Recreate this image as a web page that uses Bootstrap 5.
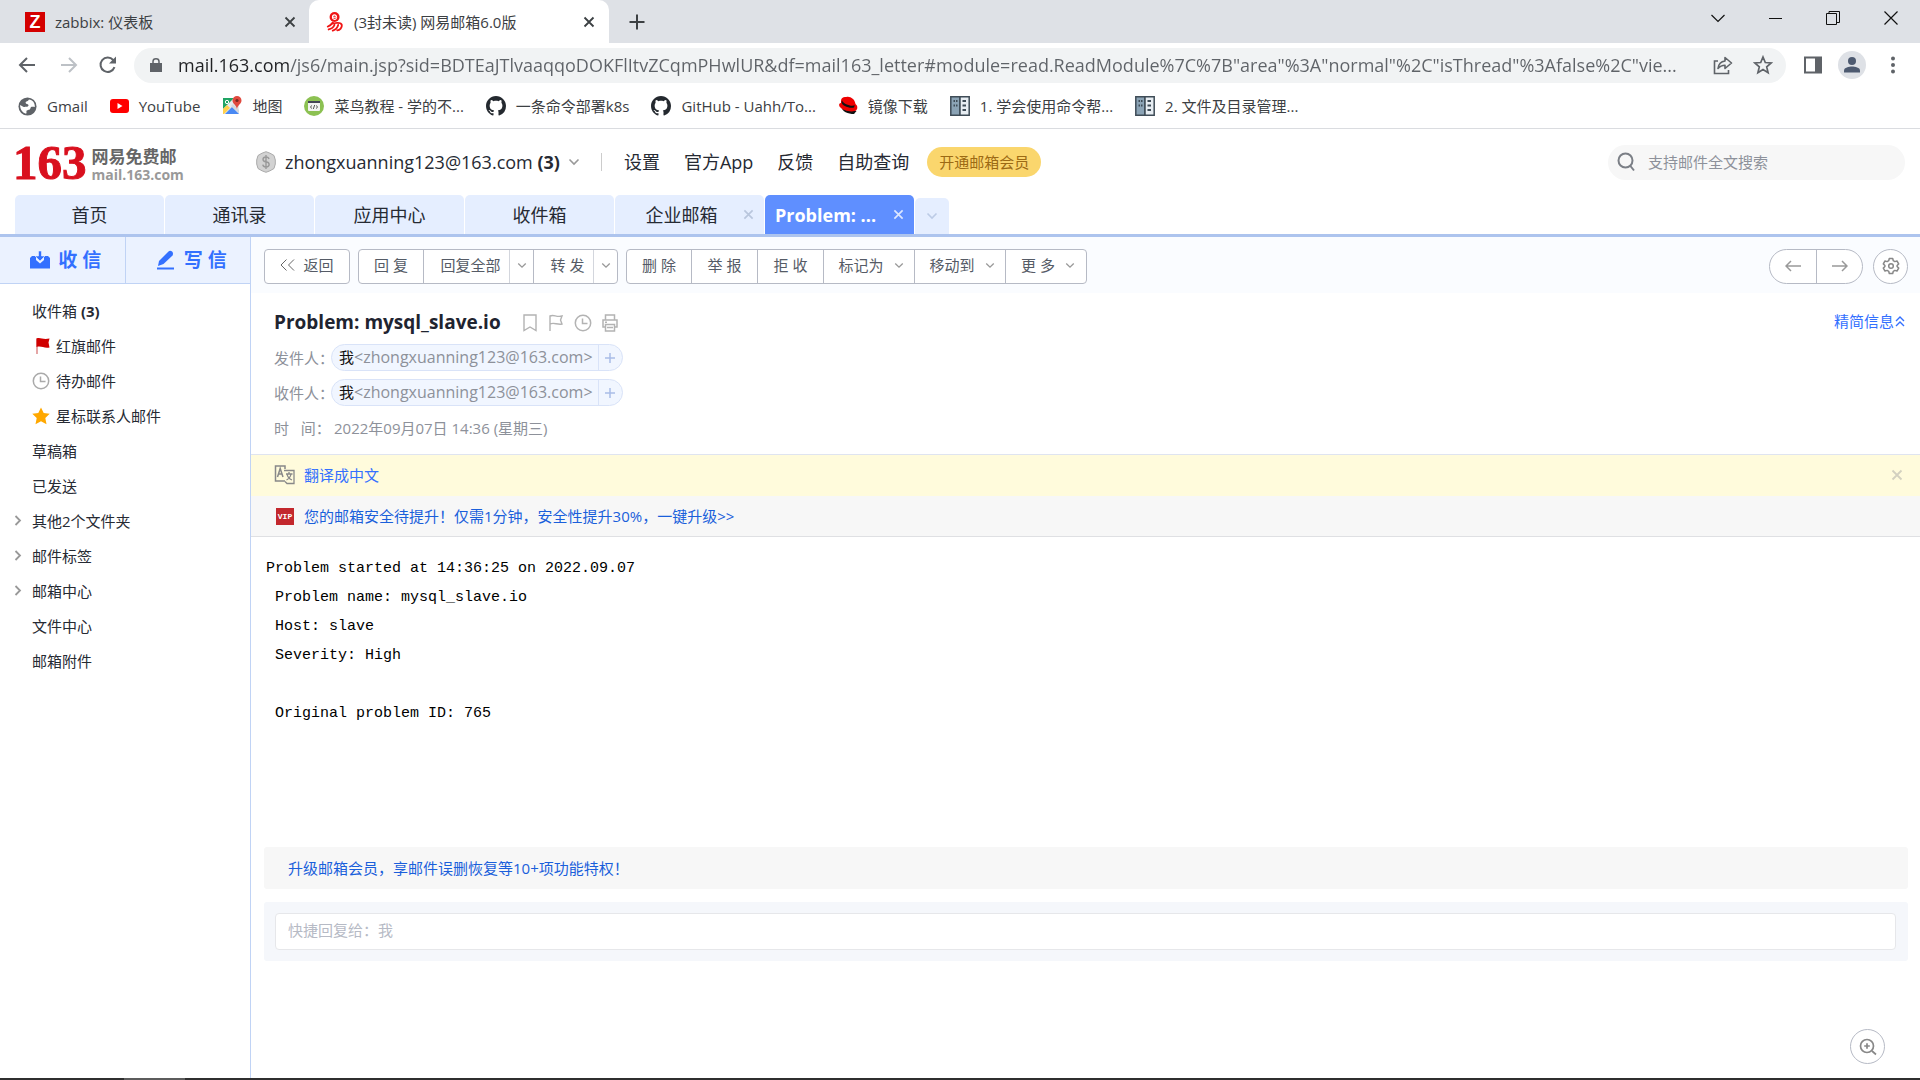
<!DOCTYPE html>
<html lang="zh-CN">
<head>
<meta charset="utf-8">
<meta name="viewport" content="width=device-width, initial-scale=1">
<title>(3封未读) 网易邮箱6.0版</title>
<link href="https://cdn.jsdelivr.net/npm/bootstrap@5.3.0/dist/css/bootstrap.min.css" rel="stylesheet">
<style>
  body { font-family: "Open Sans", "Noto Sans CJK SC", sans-serif; font-size: 15px; line-height: 20px; color: #262a33; }
  a { text-decoration: none; color: inherit; }
  svg { display: block; flex: none; fill: none; }
  svg:not([stroke]) { stroke: currentColor; }
  button { background: none; border: 0; padding: 0; color: inherit; line-height: 20px; }
  .ic-btn { display: inline-flex; align-items: center; justify-content: center; flex: none; }

  /* browser window */
  .tabstrip { background: #dee1e6; height: 43px; color: #3c4043; }
  .btab { width: 309px; height: 43px; padding: 0 13px 0 25px; gap: 10px; }
  .btab.current { width: 300px; background: #fff; border-radius: 10px 10px 0 0; padding-left: 17px; padding-right: 14px; }
  .zfav { width: 20px; height: 20px; background: #d40000; color: #fff; font: bold 18px/20px "Liberation Sans", sans-serif; text-align: center; }
  .winctl { gap: 44px; padding: 0 22px 7px 0; color: #111; }
  .addrbar { height: 44px; padding: 0 24px 0 18px; color: #5f6368; }
  .omnibox { background: #f1f3f4; border-radius: 18px; height: 35px; padding: 0 13px 0 16px; margin-right: 18px; }
  .omnibox input { border: 0; outline: 0; padding: 0; min-width: 0; font-size: 18px; line-height: 26px; height: 30px; color: transparent;
    background: linear-gradient(90deg, #202124 111px, #5f6368 111px); -webkit-background-clip: text; background-clip: text; }
  .avatar { width: 28px; height: 28px; border-radius: 50%; background: #dee1e6; color: #4d5a70; }
  .bookmarks { height: 42px; padding: 0 18px 3px; gap: 22px; border-bottom: 1px solid #dadce0; color: #3c4043; white-space: nowrap; }
  .bookmarks a { display: flex; align-items: center; gap: 10px; }

  /* mail header */
  .mailhead { height: 66px; padding: 0 15px 0 13px; font-size: 18px; line-height: 24px; color: #262a33; white-space: nowrap; }
  .brand { width: 242px; gap: 5px; }
  .brand-num { font: bold 49px/40px "Liberation Serif", serif; color: #d9101e; -webkit-text-stroke: 1px #d9101e; padding-top: 2px; }
  .brand-text { padding-top: 6px; }
  .brand-cn { font-size: 17px; line-height: 19px; font-weight: 700; color: #666; }
  .brand-en { font-size: 14px; line-height: 17px; font-weight: 700; color: #999; }
  .headlinks { gap: 24px; margin-left: 22px; }
  .vline { width: 1px; height: 18px; background: #ccc; margin-left: 21px; }
  .vip-pill { background: #fad66d; color: #9c6a14; border-radius: 15px; height: 30px; padding: 0 12px; font-size: 15px; margin-left: 18px; }
  .searchbox { width: 297px; height: 35px; border-radius: 18px; background: #f7f7f7; padding: 0 9px; gap: 13px; color: #7b7f86; }
  .searchbox input { border: 0; outline: 0; background: none; padding: 0; font-size: 15px; flex: 1; min-width: 0; }
  .searchbox input::placeholder { color: #8d919a; opacity: 1; }

  .modtabs { padding-left: 15px; gap: 1px; border-bottom: 3px solid #adc4ee; height: 42px; align-items: flex-end; font-size: 18px; line-height: 24px; }
  .modtab { width: 149px; height: 39px; background: #e5eeff; border-radius: 5px 5px 0 0; position: relative; display: flex; align-items: center; justify-content: center; color: #262a33; }
  .modtab.current { background: #5f8fff; color: #fff; font-weight: 700; justify-content: flex-start; padding-left: 10px; }
  .modtab .ic-btn { position: absolute; right: 10px; top: 14px; color: #b9c6dd; }
  .modtab.current .ic-btn { color: #dde7ff; }
  .modtab.slim { width: 34px; height: 36px; }
  .modtab.slim svg { color: #bccbe6; }

  /* sidebar */
  .side { width: 251px; border-right: 1px solid #c0d3f5; flex: none; }
  .side-acts { height: 47px; background: #ebf2ff; border-bottom: 1px solid #c0d3f5; color: #3370ff; font-size: 19px; }
  .side-acts button { flex: 1; gap: 8px; padding-left: 7px; font-weight: 700; }
  .side-acts button + button { border-left: 1px solid #c0d3f5; }
  .folders { padding: 9px 0 0; margin: 0; list-style: none; }
  .folders a { display: flex; align-items: center; height: 35px; padding-left: 32px; gap: 6px; }
  .folders .fold { padding-left: 14px; gap: 10px; }

  /* reading pane */
  .toolbar163 { height: 56px; background: #fafcff; padding: 2px 12px 0 13px; gap: 8px; color: #555b66; }
  .bgroup { display: flex; height: 35px; border: 1px solid #b6bac5; border-radius: 4px; background: #fff; }
  .bgroup button { display: flex; align-items: center; justify-content: center; width: 66px; white-space: nowrap; gap: 10px; padding-bottom: 2px; }
  .bgroup button + button { border-left: 1px solid #b6bac5; }
  .bgroup .w-first { width: 64px; }
  .bgroup .w-back { width: 84px; gap: 8px; }
  .bgroup .w-all { width: 86px; padding-left: 8px; }
  .bgroup .w-fwd { width: 60px; padding-left: 8px; }
  .bgroup .w-drop { width: 24px; border-color: #d3d6dd; }
  .bgroup .w-menu { width: 91px; padding-left: 4px; }
  .bgroup .w-more { width: 81px; padding-left: 4px; }
  .bgroup svg { color: #999; }
  .bgroup.round { border-radius: 18px; margin-right: 2px; }
  .bgroup.round button { width: 46px; padding: 0; }
  .circ { width: 35px; height: 35px; border: 1px solid #b6bac5; border-radius: 50%; background: #fff; color: #888; }
  .meta { padding: 16px 14px 0 23px; border-bottom: 1px solid #dfe4f0; color: #8d919a; height: 162px; }
  .meta-top { margin-bottom: 4px; }
  .subject { font-size: 19px; line-height: 27px; font-weight: 700; color: #1f2430; margin: 0; }
  .marks { gap: 10px; color: #b3b3b3; margin-left: 21px; }
  .brief { color: #3370ff; padding-bottom: 4px; }
  .metarow { height: 35px; }
  .metarow .lab { width: 57px; flex: none; white-space: pre; }
  .chip { height: 27px; border: 1px solid #d9e3f8; border-radius: 14px; background: #f1f6ff; font-size: 16px; }
  .chip > span { padding: 0 5px 2px 7px; }
  .chip b { font-weight: 400; font-size: 15px; color: #111; }
  .chip button { width: 24px; height: 25px; border-left: 1px solid #d9e3f8; color: #a9bde8; }
  .metarow .when { padding-left: 3px; }
  .strip { height: 41px; padding: 0 17px 0 23px; }
  .strip.trans { background: #fffbdc; color: #3370ff; padding-bottom: 2px; }
  .strip.safe { background: #f7f7f7; color: #1a5fdb; border-bottom: 1px solid #dfe0e3; }
  .strip-ico { width: 30px; }
  .dismiss { color: #d3d0c0; }
  .vipfav { width: 18px; height: 17px; margin-left: 2px; background: #c3282d; color: #fff; font: bold 8px/17px "Liberation Mono", monospace; text-align: center; }
  .mailbody { font: 15px/29px "Liberation Mono", monospace; color: #000; margin: 0; padding: 17px 15px 0; min-height: 310px; overflow: visible; }
  .promo { margin: 0 12px 0 13px; height: 42px; background: #f7f7f7; border-radius: 3px; padding: 0 24px; color: #1a5fdb; }
  .quick { margin: 13px 12px 0 13px; background: #f5f7fb; border-radius: 3px; padding: 11px 12px 11px 11px; }
  .quick input { height: 37px; width: 100%; border: 1px solid #e6e7ea; border-radius: 4px; padding: 0 12px 4px; font-size: 15px; background: #fff; display: block; }
  .quick input::placeholder { color: #b6bac5; opacity: 1; }
  .zoomer { position: absolute; right: 35px; bottom: 14px; }
  .deskbar { height: 2px; background: #2f2f2f; padding-left: 124px; flex: none; }
  .deskbar i { display: block; width: 61px; height: 2px; background: #5c5c5c; }
</style>
<script src="https://cdn.jsdelivr.net/npm/bootstrap@5.3.0/dist/js/bootstrap.bundle.min.js"></script>
</head>
<body class="d-flex flex-column min-vh-100">
<svg class="d-none" aria-hidden="true">
  <symbol id="chev" viewBox="0 0 12 8"><path d="M1.500 1.500 6 6l4.500-4.500" stroke-width="1.600"/></symbol>
  <symbol id="cross" viewBox="0 0 12 12"><path d="M1.500 1.500l9 9M10.500 1.500l-9 9" stroke-width="1.800"/></symbol>
  <symbol id="crossthin" viewBox="0 0 14 14"><path d="M.5.5l13 13M13.500.5l-13 13" stroke-width="1.200"/></symbol>
  <symbol id="arrow" viewBox="0 0 18 16"><path d="M17 8H2M9 1 2 8l7 7" stroke-width="2"/></symbol>
  <symbol id="clock" viewBox="0 0 18 18"><circle cx="9" cy="9" r="7.700" stroke-width="1.500"/><path d="M8.500 4.500V9.500h5" stroke-width="1.500"/></symbol>
  <symbol id="octo" viewBox="0 0 16 16"><path fill="#24292f" stroke="none" d="M8 0C3.580 0 0 3.580 0 8c0 3.540 2.290 6.530 5.470 7.590.4.07.55-.17.55-.38 0-.19-.01-.82-.01-1.490-2.010.37-2.530-.49-2.690-.94-.09-.23-.48-.94-.82-1.130-.28-.15-.68-.52-.01-.53.63-.01 1.080.58 1.230.82.72 1.210 1.870.87 2.330.66.07-.52.28-.87.51-1.070-1.780-.2-3.640-.89-3.640-3.950 0-.87.31-1.590.82-2.150-.08-.2-.36-1.020.08-2.120 0 0 .67-.21 2.200.82.64-.18 1.320-.27 2-.27.68 0 1.360.09 2 .27 1.530-1.040 2.200-.82 2.200-.82.44 1.100.16 1.920.08 2.120.51.56.82 1.270.82 2.150 0 3.070-1.870 3.750-3.650 3.950.29.25.54.73.54 1.480 0 1.070-.01 1.930-.01 2.200 0 .21.15.46.55.38A8.012 8.012 0 0 0 16 8c0-4.420-3.580-8-8-8z"/></symbol>
  <symbol id="book" viewBox="0 0 20 20"><path fill="#8ba3b5" stroke="#3f4c57" stroke-width="1.500" d="M.8.8H10v18.400H.8z"/><path fill="#e7edf2" stroke="#3f4c57" stroke-width="1.500" d="M10 .8h9.200v18.400H10z"/><path stroke="#3f4c57" stroke-width="2" d="M3.500 5h1.500M6 5h1.500M3.500 9.500h1.500M6 9.500h1.500M12.500 5h3.500M12.500 9.500h3.500M12.500 14h3.500"/></symbol>
</svg>

<header>
  <div class="tabstrip d-flex">
    <div class="btab d-flex align-items-center"><span class="zfav">Z</span><span class="flex-grow-1">zabbix: 仪表板</span>
      <button class="ic-btn" aria-label="关闭标签页"><svg width="12" height="12"><use href="#cross"/></svg></button></div>
    <div class="btab current d-flex align-items-center">
      <svg width="18" height="20" viewBox="0 0 18 22" stroke="#f01414" stroke-width="2" stroke-linecap="round"><circle cx="8.500" cy="5.500" r="5.500" fill="#f01414" stroke="none"/><path d="M6.300 5.800h4.400c0-3.400-4.500-3.400-4.500 0 0 2.600 3 2.800 4.200 1.400" stroke="#fff" stroke-width="1.300"/><path d="M6.500 11.500C5 14 3 15.500 1 16M4.500 13.500c4-2 11.500-2.500 12 .8.300 2.800-2 5.700-5 6M8.500 14c-1 2.500-3.500 4.500-6.500 5.200M12.500 14.200c-.8 3-3 5.300-6 6.300"/></svg>
      <span class="flex-grow-1">(3封未读) 网易邮箱6.0版</span>
      <button class="ic-btn" aria-label="关闭标签页"><svg width="12" height="12"><use href="#cross"/></svg></button></div>
    <button class="ic-btn ms-3 ps-1" aria-label="新标签页"><svg width="16" height="16" viewBox="0 0 16 16"><path d="M8 .5v15M.5 8h15" stroke-width="2"/></svg></button>
    <div class="winctl d-flex align-items-center ms-auto">
      <button class="ic-btn" aria-label="搜索标签页"><svg width="14" height="9" viewBox="0 0 14 9"><path d="M.5 1 7 7.500 13.500 1" stroke-width="1.200"/></svg></button>
      <button class="ic-btn" aria-label="最小化"><svg width="13" height="13" viewBox="0 0 13 13"><path d="M0 6.500h13"/></svg></button>
      <button class="ic-btn" aria-label="还原"><svg width="14" height="14" viewBox="0 0 14 14"><path d="M.5 2.500h10v11H.5zM3 2.500v-2h10.500v11h-3"/></svg></button>
      <button class="ic-btn" aria-label="关闭"><svg width="14" height="14"><use href="#crossthin"/></svg></button>
    </div>
  </div>
  <div class="addrbar d-flex align-items-center">
    <button class="ic-btn" aria-label="后退"><svg width="18" height="16"><use href="#arrow"/></svg></button>
    <button class="ic-btn ms-4" aria-label="前进"><svg width="18" height="16" viewBox="0 0 18 16" stroke="#bdc1c6"><path d="M1 8h15M9 1l7 7-7 7" stroke-width="2"/></svg></button>
    <button class="ic-btn mx-3 ps-1" aria-label="重新加载"><svg width="20" height="20" viewBox="0 0 20 20"><path d="M16.500 12.200A7.200 7.200 0 1 1 15.200 5l1 1.200" stroke-width="2"/><path d="M18 1.500v7h-7z" fill="currentColor" stroke="none"/></svg></button>
    <div class="omnibox d-flex align-items-center flex-grow-1 gap-3">
      <svg width="12" height="14" viewBox="0 0 12 14"><path d="M0 5h12v9H0z" fill="currentColor" stroke="none"/><path d="M3 6V3.500a3 2.700 0 0 1 6 0V6" stroke-width="1.500"/></svg>
      <input class="flex-grow-1" type="text" aria-label="地址栏" value="mail.163.com/js6/main.jsp?sid=BDTEaJTlvaaqqoDOKFlItvZCqmPHwlUR&amp;df=mail163_letter#module=read.ReadModule%7C%7B&quot;area&quot;%3A&quot;normal&quot;%2C&quot;isThread&quot;%3Afalse%2C&quot;vie...">
      <button class="ic-btn" aria-label="分享"><svg width="20" height="20" viewBox="0 0 20 20" stroke-width="1.600"><path d="M5 6H1.500v12.500h14V15"/><path d="M12 2.500l6.500 5.500-6.500 5.500v-3.300c-3 0-5 .8-7 3.300.5-4 2.500-7 7-7.500z" stroke-linejoin="round"/></svg></button>
      <button class="ic-btn ms-1" aria-label="收藏"><svg width="20" height="20" viewBox="0 0 20 20"><path d="M10 2l2.300 5.500 5.900.5-4.500 3.900 1.400 5.800L10 14.600l-5.100 3.100 1.400-5.800L1.800 8l5.900-.5z" stroke-width="1.700"/></svg></button>
    </div>
    <button class="ic-btn" aria-label="侧边栏"><svg width="18" height="18" viewBox="0 0 18 18"><path d="M1 1.500h16v15H1z" stroke-width="2"/><path d="M11 1h7v16h-7z" fill="currentColor" stroke="none"/></svg></button>
    <button class="ic-btn avatar ms-3" aria-label="用户"><svg width="18" height="18" viewBox="0 0 18 18"><g fill="currentColor" stroke="none"><circle cx="9" cy="5" r="4"/><path d="M1 16.500v-2C1 11.500 6 10.500 9 10.500s8 1 8 4v2z"/></g></svg></button>
    <button class="ic-btn ms-4" aria-label="菜单"><svg width="6" height="18" viewBox="0 0 6 18"><g fill="currentColor" stroke="none"><circle cx="3" cy="2.500" r="2"/><circle cx="3" cy="9" r="2"/><circle cx="3" cy="15.500" r="2"/></g></svg></button>
  </div>
  <nav class="bookmarks d-flex align-items-center">
    <a href="#"><svg width="19" height="19" viewBox="0 0 20 20"><circle cx="10" cy="10" r="9.500" fill="#5f6368" stroke="none"/><path d="M11.500 2.500c-.5 2-3.500 1.500-3.500 3.500 0 1.500 2.500 1 3 2.500.5 2-2.500 2-5 2L2.200 8.500C2 13 5 17 8.500 17.700c1-1 0-2.200.5-3.200 1-1.500 3.500-.5 4-2.500.3-2 2-2 4.700-1.500C18 6 15.500 3 11.500 2.500z" fill="#fff" stroke="none"/></svg>Gmail</a>
    <a href="#"><svg width="19" height="14" viewBox="0 0 19 14"><rect width="19" height="14" rx="3" fill="#f00" stroke="none"/><path d="M7.500 4v6l5-3z" fill="#fff" stroke="none"/></svg>YouTube</a>
    <a href="#"><svg width="20" height="20" viewBox="0 0 20 20" stroke="none"><path d="M1 2h16v16H1z" fill="#e8eaed"/><path d="M1 2h11L1 13z" fill="#1fa463"/><path d="M3 18l7-7 7 7z" fill="#4a89f3"/><path d="M1 13l4-4 3 3-6 6H1z" fill="#ffd04b"/><path d="M9 10l2-2 6 6v3z" fill="#d5d8dc"/><circle cx="5" cy="6" r="1.700" fill="none" stroke="#fff"/><path d="M15 0a4.500 4.500 0 0 1 4.500 4.500C19.500 8 15.500 9 15 13c-.5-4-4.500-5-4.500-8.500A4.500 4.500 0 0 1 15 0z" fill="#e0493e"/><circle cx="15" cy="4.500" r="1.600" fill="#7a2820"/></svg>地图</a>
    <a href="#"><svg width="20" height="20" viewBox="0 0 20 20"><circle cx="10" cy="10" r="10" fill="#8cc152" stroke="none"/><rect x="4" y="5" width="12" height="10" rx="1" fill="#f2f2f2" stroke="none"/><path d="M4 6h12" stroke="#445" stroke-width="2"/><path d="M8 9.500 6.300 11 8 12.500M12 9.500l1.700 1.500-1.700 1.500M10.700 9l-1.400 4" stroke="#555"/></svg>菜鸟教程 - 学的不...</a>
    <a href="#"><svg width="20" height="20"><use href="#octo"/></svg>一条命令部署k8s</a>
    <a href="#"><svg width="20" height="20"><use href="#octo"/></svg>GitHub - Uahh/To...</a>
    <a href="#"><svg width="20" height="20" viewBox="0 0 20 20" stroke="none"><path d="M3 10c1 6 7 8 13 8l2.500-3z" fill="#111"/><path d="M3 5c0-3 2-4 4-4 1 0 2-.8 4 0 4 .5 6 4 6.500 7 2 1.500 2.500 4 1 6-3 3-14 1-17-3.500C.5 8.500 1.500 7 3 7z" fill="#e00"/><path d="M3.500 6c0 3.500 8 7 12.500 5.500l.8-2.200C13.500 11 5.500 8 4 4.500z" fill="#111"/></svg>镜像下载</a>
    <a href="#"><svg width="20" height="20"><use href="#book"/></svg>1. 学会使用命令帮...</a>
    <a href="#"><svg width="20" height="20"><use href="#book"/></svg>2. 文件及目录管理...</a>
  </nav>
</header>

<div class="mailhead d-flex align-items-center">
  <a class="brand d-flex align-items-center" href="#"><span class="brand-num">163</span>
    <span class="brand-text d-flex flex-column"><span class="brand-cn">网易免费邮</span><span class="brand-en">mail.163.com</span></span></a>
  <svg width="22" height="22" viewBox="0 0 22 22"><path d="M11 .7l4 1.500 4 2.300 1.300 4.500v4L19 17.500l-4 2.300-4 1.500-4-1.500-4-2.300L1.700 13V9L3 4.500l4-2.300z" fill="#d2d2d2" stroke="#aaa"/><path d="M14 8c-.3-1.300-1.500-2-3-2-4 0-4 4.300 0 4.800 4.200.5 4.200 5.200 0 5.200-1.700 0-3-.8-3.200-2.300M11 4v14" stroke="#999" stroke-width="1.400"/></svg>
  <a class="ms-2" href="#">zhongxuanning123@163.com <b>(3)</b></a>
  <svg class="ms-2" width="12" height="8" color="#999"><use href="#chev"/></svg>
  <span class="vline"></span>
  <nav class="headlinks d-flex"><a href="#">设置</a><a href="#">官方App</a><a href="#">反馈</a><a href="#">自助查询</a></nav>
  <button class="vip-pill">开通邮箱会员</button>
  <label class="searchbox d-flex align-items-center ms-auto"><svg width="18" height="20" viewBox="0 0 18 20"><circle cx="8.500" cy="8.500" r="7" stroke-width="2"/><path d="M13 13.500l4 5" stroke-width="2"/></svg>
    <input type="search" placeholder="支持邮件全文搜索" aria-label="搜索邮件"></label>
</div>

<nav class="modtabs d-flex">
  <a class="modtab" href="#">首页</a><a class="modtab" href="#">通讯录</a><a class="modtab" href="#">应用中心</a><a class="modtab" href="#">收件箱</a>
  <div class="modtab"><a class="pe-3" href="#">企业邮箱</a><button class="ic-btn" aria-label="关闭"><svg width="11" height="11"><use href="#cross"/></svg></button></div>
  <div class="modtab current"><a href="#">Problem: ...</a><button class="ic-btn" aria-label="关闭"><svg width="11" height="11"><use href="#cross"/></svg></button></div>
  <button class="modtab slim" aria-label="更多标签"><svg width="12" height="8"><use href="#chev"/></svg></button>
</nav>

<div class="d-flex flex-grow-1">
  <aside class="side">
    <div class="side-acts d-flex">
      <button class="ic-btn"><svg width="20" height="18" viewBox="0 0 20 18"><path d="M0 7l2-2h4v4l4 3.500L14 9V5h4l2 2v10.500H0z" fill="currentColor" stroke="none"/><path d="M8.500 0h3v5H15l-5 5-5-5h3.500z" fill="currentColor" stroke="#ebf2ff" stroke-width=".6"/></svg>收 信</button>
      <button class="ic-btn"><svg width="20" height="20" viewBox="0 0 20 20"><path d="M2 16l1-5L12.500 1.500c2-2 6 1 4 4L7.500 14z" fill="currentColor" stroke="none"/><path d="M1 18.500h17" stroke-width="2"/></svg>写 信</button>
    </div>
    <ul class="folders">
      <li><a href="#"><span>收件箱 <b>(3)</b></span></a></li>
      <li><a href="#"><svg width="18" height="18" viewBox="0 0 18 18"><path d="M5 1.500V17" stroke="#d88" stroke-width="1.500"/><path d="M4.500 1.500c4-1.500 6 1.500 13 0l-1 4 1 5c-6 1-8-2-13-.5z" fill="#d00000" stroke="none"/></svg>红旗邮件</a></li>
      <li><a href="#"><svg width="18" height="18" color="#aaa"><use href="#clock"/></svg>待办邮件</a></li>
      <li><a href="#"><svg width="18" height="18" viewBox="0 0 18 18"><path d="M9 .5l2.700 5.600 6 .7-4.400 4.200 1.200 6.300L9 14.300l-5.500 3 1.200-6.300L.3 6.800l6-.7z" fill="#ffa800" stroke="none"/></svg>星标联系人邮件</a></li>
      <li><a href="#">草稿箱</a></li>
      <li><a href="#">已发送</a></li>
      <li><a class="fold" href="#"><svg width="8" height="11" viewBox="0 0 8 11" color="#999"><path d="M1.500 1 6 5.500 1.500 10" stroke-width="1.800"/></svg>其他2个文件夹</a></li>
      <li><a class="fold" href="#"><svg width="8" height="11" viewBox="0 0 8 11" color="#999"><path d="M1.500 1 6 5.500 1.500 10" stroke-width="1.800"/></svg>邮件标签</a></li>
      <li><a class="fold" href="#"><svg width="8" height="11" viewBox="0 0 8 11" color="#999"><path d="M1.500 1 6 5.500 1.500 10" stroke-width="1.800"/></svg>邮箱中心</a></li>
      <li><a href="#">文件中心</a></li>
      <li><a href="#">邮箱附件</a></li>
    </ul>
  </aside>

  <main class="flex-grow-1 position-relative">
    <div class="toolbar163 d-flex align-items-center">
      <div class="bgroup"><button class="w-back"><svg width="15" height="12" viewBox="0 0 15 12"><path d="M6.500.5 1 6l5.500 5.500M14 .5 8.500 6l5.500 5.500" stroke="#666"/></svg>返回</button></div>
      <div class="bgroup"><button class="w-first">回 复</button><button class="w-all">回复全部</button><button class="w-drop" aria-label="回复选项"><svg width="10" height="7"><use href="#chev"/></svg></button><button class="w-fwd">转 发</button><button class="w-drop" aria-label="转发选项"><svg width="10" height="7"><use href="#chev"/></svg></button></div>
      <div class="bgroup"><button class="w-first">删 除</button><button>举 报</button><button>拒 收</button><button class="w-menu">标记为<svg width="10" height="7"><use href="#chev"/></svg></button><button class="w-menu">移动到<svg width="10" height="7"><use href="#chev"/></svg></button><button class="w-more">更 多<svg width="10" height="7"><use href="#chev"/></svg></button></div>
      <div class="bgroup round ms-auto"><button aria-label="上一封"><svg width="16" height="12" viewBox="0 0 16 12"><path d="M16 6H1M6 1 1 6l5 5" stroke-width="1.500"/></svg></button><button aria-label="下一封"><svg width="16" height="12" viewBox="0 0 16 12"><path d="M0 6h15M10 1l5 5-5 5" stroke-width="1.500"/></svg></button></div>
      <button class="ic-btn circ" aria-label="设置"><svg width="18" height="18" viewBox="0 0 18 18" stroke-width="1.500"><path d="M7.300 1.500h3.400l.6 2.200 1.500.9 2.200-.6 1.700 2.900L15.100 8.500v1l1.600 1.600-1.700 2.900-2.200-.6-1.500.9-.6 2.200H7.300l-.6-2.200-1.500-.9-2.200.6-1.700-2.900 1.600-1.600v-1L1.300 6.900 3 4l2.200.6 1.500-.9z" stroke-linejoin="round"/><circle cx="9" cy="9" r="2.300"/></svg></button>
    </div>

    <section class="meta">
      <div class="meta-top d-flex align-items-center">
        <h1 class="subject">Problem: mysql_slave.io</h1>
        <div class="marks d-flex align-items-center">
          <button class="ic-btn" aria-label="标签"><svg width="16" height="18" viewBox="0 0 16 18"><path d="M2 1h12v15.500L8 13l-6 3.500z" stroke-width="1.400"/></svg></button>
          <button class="ic-btn" aria-label="红旗"><svg width="16" height="18" viewBox="0 0 16 18"><path d="M2 17V2c4-2 6 1.500 12 0l-1.500 4L14 10C9 11 6 8 2 10" stroke-width="1.400"/></svg></button>
          <button class="ic-btn" aria-label="待办"><svg width="18" height="18"><use href="#clock"/></svg></button>
          <button class="ic-btn" aria-label="打印"><svg width="16" height="18" viewBox="0 0 16 18" stroke-width="1.500"><path d="M3.500 6V1h9v5M3.500 13H1V6h14v7h-2.500M3.500 10.500h9V17h-9zM5 13.500h6M3 8.300h2"/></svg></button>
        </div>
        <a class="brief ms-auto d-flex align-items-center" href="#">精简信息<svg width="12" height="12" viewBox="0 0 12 12"><path d="M2 6l4-4 4 4M2 11l4-4 4 4" stroke-width="1.400"/></svg></a>
      </div>
      <div class="metarow d-flex align-items-center"><span class="lab">发件人：</span><span class="chip d-flex align-items-center"><span><b>我</b>&lt;zhongxuanning123@163.com&gt;</span><button class="ic-btn" aria-label="添加联系人"><svg width="10" height="10" viewBox="0 0 10 10"><path d="M5 0v10M0 5h10" stroke-width="1.500"/></svg></button></span></div>
      <div class="metarow d-flex align-items-center"><span class="lab">收件人：</span><span class="chip d-flex align-items-center"><span><b>我</b>&lt;zhongxuanning123@163.com&gt;</span><button class="ic-btn" aria-label="添加联系人"><svg width="10" height="10" viewBox="0 0 10 10"><path d="M5 0v10M0 5h10" stroke-width="1.500"/></svg></button></span></div>
      <div class="metarow d-flex align-items-center"><span class="lab">时&nbsp;&nbsp; 间：</span><span class="when">2022年09月07日 14:36 (星期三)</span></div>
    </section>
    <div class="strip trans d-flex align-items-center"><span class="strip-ico"><svg width="21" height="20" viewBox="0 0 21 20" color="#888"><path d="M11 16H1.500V1H11v3M3.500 12 6.200 3.500 9 12M4.500 9h3.500" stroke-width="1.500"/><path d="M10 5.500h10v13h-7l-2-2M12 9h6.500M15 7v2M17 9c-.5 3-2.500 5-4.500 6M13 9c.5 3 2.500 5 5 6" stroke-width="1.300"/></svg></span><a href="#">翻译成中文</a>
      <button class="ic-btn dismiss ms-auto" aria-label="关闭"><svg width="12" height="12"><use href="#cross"/></svg></button></div>
    <div class="strip safe d-flex align-items-center"><span class="strip-ico"><span class="vipfav d-block">VIP</span></span><a href="#">您的邮箱安全待提升！仅需1分钟，安全性提升30%，一键升级&gt;&gt;</a></div>
    <pre class="mailbody">Problem started at 14:36:25 on 2022.09.07
 Problem name: mysql_slave.io
 Host: slave
 Severity: High

 Original problem ID: 765</pre>
    <div class="promo d-flex align-items-center"><a href="#">升级邮箱会员，享邮件误删恢复等10+项功能特权！</a></div>
    <div class="quick"><input type="text" placeholder="快捷回复给：我" aria-label="快捷回复"></div>
    <button class="ic-btn circ zoomer" aria-label="放大"><svg width="18" height="18" viewBox="0 0 18 18" stroke-width="1.700"><circle cx="8" cy="8" r="6.500"/><path d="M13 13l4 3.500M8 5.200v5.600M5.200 8h5.600"/></svg></button>
  </main>
</div>
<div class="deskbar"><i></i></div>
</body>
</html>
